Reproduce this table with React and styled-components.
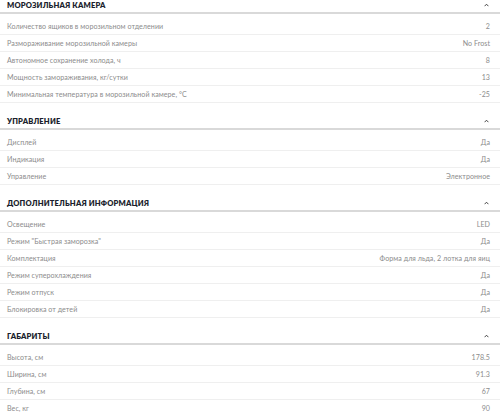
import React from "react";
import styled, { createGlobalStyle } from "styled-components";

const GlobalStyle = createGlobalStyle`
  html, body { margin: 0; padding: 0; background: #ffffff; }
  body { font-family: "Lato", "Noto Sans", sans-serif; -webkit-font-smoothing: antialiased; }
`;

const Page = styled.div`
  width: 500px;
  margin-top: -13px;
  display: flex;
  flex-direction: column;
`;

const Section = styled.section`
  display: flex;
  flex-direction: column;
`;

const Header = styled.div`
  padding: 10px 11px 0 7px;
  box-sizing: content-box;
  height: 15px;
  display: flex;
  align-items: center;
  justify-content: space-between;
  border-bottom: 2px solid #d9d9d9;
`;

const Title = styled.h3`
  margin: 0;
  font-size: 7.6px;
  font-weight: 800;
  letter-spacing: 0.15px;
  color: #1c1f2e;
  text-transform: uppercase;
`;

const Chevron = styled.svg`
  width: 5px;
  height: 4px;
  display: block;
`;

const List = styled.div`
  padding-top: 4px;
  display: flex;
  flex-direction: column;
`;

const Row = styled.div`
  height: 16px;
  padding: 0 10px 0 7px;
  display: flex;
  align-items: center;
  justify-content: space-between;
  border-bottom: 1px solid #efefef;
  font-size: 7.1px;
  letter-spacing: 0.05px;
  color: #8c8c8c;
`;

const Label = styled.span``;
const Value = styled.span`
  text-align: right;
`;

const sections = [
  {
    title: "Морозильная камера",
    rows: [
      ["Количество ящиков в морозильном отделении", "2"],
      ["Размораживание морозильной камеры", "No Frost"],
      ["Автономное сохранение холода, ч", "8"],
      ["Мощность замораживания, кг/сутки", "13"],
      ["Минимальная температура в морозильной камере, °С", "-25"],
    ],
  },
  {
    title: "Управление",
    rows: [
      ["Дисплей", "Да"],
      ["Индикация", "Да"],
      ["Управление", "Электронное"],
    ],
  },
  {
    title: "Дополнительная информация",
    rows: [
      ["Освещение", "LED"],
      ["Режим \"Быстрая заморозка\"", "Да"],
      ["Комплектация", "Форма для льда, 2 лотка для яиц"],
      ["Режим суперохлаждения", "Да"],
      ["Режим отпуск", "Да"],
      ["Блокировка от детей", "Да"],
    ],
  },
  {
    title: "Габариты",
    rows: [
      ["Высота, см", "178.5"],
      ["Ширина, см", "91.3"],
      ["Глубина, см", "67"],
      ["Вес, кг", "90"],
    ],
  },
];

export default function App() {
  return (
    <>
      <GlobalStyle />
      <Page>
        {sections.map((s) => (
          <Section key={s.title}>
            <Header>
              <Title>{s.title}</Title>
              <Chevron viewBox="0 0 5 4">
                <path d="M0.6 3.2 L2.5 1.2 L4.4 3.2" fill="none" stroke="#333" strokeWidth="0.9" />
              </Chevron>
            </Header>
            <List>
              {s.rows.map(([l, v]) => (
                <Row key={l}>
                  <Label>{l}</Label>
                  <Value>{v}</Value>
                </Row>
              ))}
            </List>
          </Section>
        ))}
      </Page>
    </>
  );
}
